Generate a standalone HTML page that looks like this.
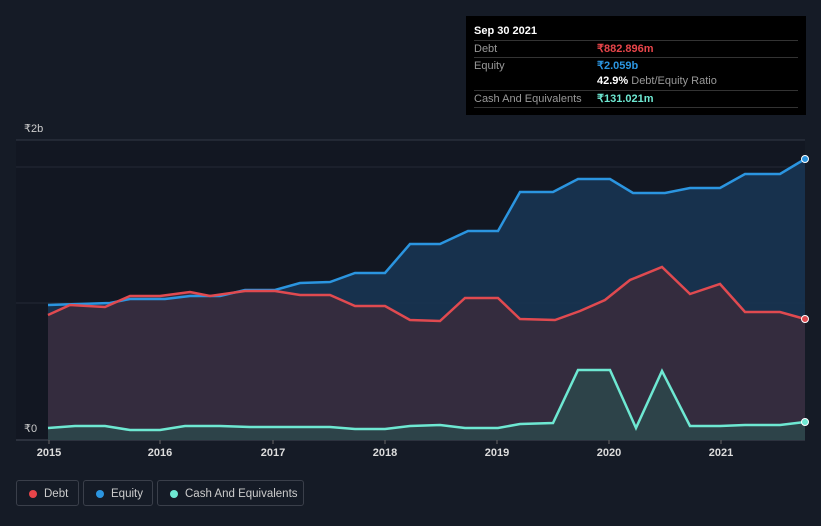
<!DOCTYPE html>
<html><head><style>
body{margin:0;width:821px;height:526px;background:#151b26;font-family:"Liberation Sans",sans-serif;overflow:hidden;position:relative}
.tip{position:absolute;left:466px;top:16px;width:340px;height:99px;background:#000;}
.tip .h{position:absolute;left:8px;top:9px;color:#fff;font-size:11px;font-weight:bold}
.row{position:absolute;left:8px;width:324px;border-top:1px solid #333;font-size:11px;color:#999;height:16px;line-height:16px}
.row span{position:absolute;left:123px;font-weight:bold}
.leg{position:absolute;top:480px;height:26px;border:1px solid #3a3f4a;border-radius:3px;color:#ccc;font-size:11.5px;line-height:26px;box-sizing:border-box}
.leg i{position:absolute;left:12px;top:9px;width:8px;height:8px;border-radius:50%}
.leg b{font-weight:normal;position:absolute;left:27px}
.yr{position:absolute;top:447px;color:#ddd;font-size:11px;font-weight:bold;transform:translateX(-50%)}
</style></head><body>
<svg width="821" height="526" style="position:absolute;left:0;top:0">
<rect x="16" y="140" width="789" height="300" fill="#121722"/>
<line x1="16" y1="140" x2="805" y2="140" stroke="#333a45"/>
<line x1="16" y1="167" x2="805" y2="167" stroke="#242a35"/>
<line x1="16" y1="303" x2="805" y2="303" stroke="#242a35"/>
<line x1="16" y1="440" x2="805" y2="440" stroke="#444a55"/>
<polygon fill="#183452" opacity="0.9" points="48,305 110,303 130,299 165,299 190,296 220,296 245,290 275,290 300,283 330,282 355,273 385,273 410,244 440,244 468,231 498,231 520,192 553,192 578,179 610,179 633,193 665,193 690,188 720,188 745,174 780,174 805,159 805,440 48,440"/>
<polygon fill="#3a2c3c" opacity="0.85" points="48,315 70,305 105,307 130,296 160,296 190,292 210,296 245,291 275,291 300,295 330,295 355,306 385,306 410,320 440,321 465,298 498,298 520,319 555,320 580,311 605,300 630,280 662,267 690,294 720,284 745,312 780,312 805,319 805,440 48,440"/>
<polygon fill="#2c4a4c" opacity="0.8" points="48,428 75,426 105,426 130,430 160,430 185,426 220,426 250,427 330,427 355,429 385,429 410,426 440,425 465,428 498,428 520,424 553,423 578,370 610,370 636,428 662,371 690,426 720,426 745,425 780,425 805,422 805,440 48,440"/>
<polyline fill="none" stroke="#2b95e0" stroke-width="2.5" points="48,305 110,303 130,299 165,299 190,296 220,296 245,290 275,290 300,283 330,282 355,273 385,273 410,244 440,244 468,231 498,231 520,192 553,192 578,179 610,179 633,193 665,193 690,188 720,188 745,174 780,174 805,159"/>
<polyline fill="none" stroke="#e04a50" stroke-width="2.5" points="48,315 70,305 105,307 130,296 160,296 190,292 210,296 245,291 275,291 300,295 330,295 355,306 385,306 410,320 440,321 465,298 498,298 520,319 555,320 580,311 605,300 630,280 662,267 690,294 720,284 745,312 780,312 805,319"/>
<polyline fill="none" stroke="#6ee8d2" stroke-width="2.5" points="48,428 75,426 105,426 130,430 160,430 185,426 220,426 250,427 330,427 355,429 385,429 410,426 440,425 465,428 498,428 520,424 553,423 578,370 610,370 636,428 662,371 690,426 720,426 745,425 780,425 805,422"/>
<circle cx="805" cy="159" r="3.5" fill="#2b95e0" stroke="#fff"/>
<circle cx="805" cy="319" r="3.5" fill="#e04a50" stroke="#fff"/>
<circle cx="805" cy="422" r="3.5" fill="#6ee8d2" stroke="#fff"/>
<g stroke="#666"><line x1="49" y1="440" x2="49" y2="444"/><line x1="160" y1="440" x2="160" y2="444"/><line x1="273" y1="440" x2="273" y2="444"/><line x1="385" y1="440" x2="385" y2="444"/><line x1="497" y1="440" x2="497" y2="444"/><line x1="609" y1="440" x2="609" y2="444"/><line x1="721" y1="440" x2="721" y2="444"/></g>
<text x="24" y="132" fill="#ccc" font-size="11" font-family="Liberation Sans">₹2b</text>
<text x="24" y="432" fill="#ccc" font-size="11" font-family="Liberation Sans">₹0</text>
</svg>
<div class="yr" style="left:49px">2015</div><div class="yr" style="left:160px">2016</div><div class="yr" style="left:273px">2017</div><div class="yr" style="left:385px">2018</div><div class="yr" style="left:497px">2019</div><div class="yr" style="left:609px">2020</div><div class="yr" style="left:721px">2021</div>
<div class="tip"><div class="h">Sep 30 2021</div>
<div class="row" style="top:24px">Debt<span style="color:#e8454a">₹882.896m</span></div>
<div class="row" style="top:41px">Equity<span style="color:#2b95e0">₹2.059b</span></div>
<div class="row" style="top:57px;border-top:none"><span style="color:#fff">42.9% <b style="color:#999;font-weight:normal">Debt/Equity Ratio</b></span></div>
<div class="row" style="top:74px;border-bottom:1px solid #333">Cash And Equivalents<span style="color:#6ee8d2">₹131.021m</span></div>
</div>
<div class="leg" style="left:16px;width:63px"><i style="background:#e8454a"></i><b>Debt</b></div>
<div class="leg" style="left:83px;width:70px"><i style="background:#2b95e0"></i><b>Equity</b></div>
<div class="leg" style="left:157px;width:147px"><i style="background:#6ee8d2"></i><b>Cash And Equivalents</b></div>
</body></html>
